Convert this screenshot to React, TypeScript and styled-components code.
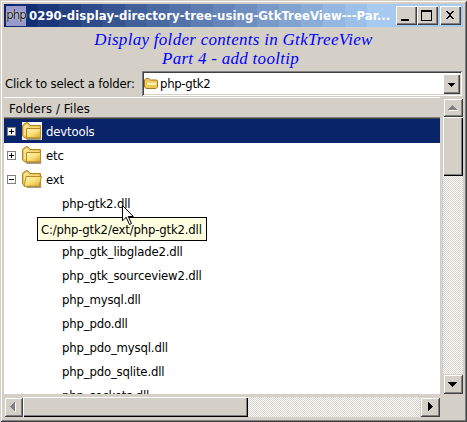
import React from "react";
import styled, { createGlobalStyle, css } from "styled-components";

const face = "#d4d0c8";
const navy = "#0a246a";
const uiFont = `"DejaVu Sans Condensed", "DejaVu Sans", sans-serif`;

/* The caption fades in flat 22px bands from navy to light blue. */
const captionBands = (() => {
  const from = [10, 36, 106];
  const to = [166, 202, 240];
  const stops: string[] = [];
  const count = 18;
  for (let i = 0; i < count; i++) {
    const t = i / (count - 1);
    const c = from.map((v, k) => Math.round(v + (to[k] - v) * t)).join(",");
    const start = i === 0 ? 0 : 11 + (i - 1) * 22;
    const end = i === count - 1 ? "100%" : `${11 + i * 22}px`;
    stops.push(`rgb(${c}) ${start}px ${end}`);
  }
  return `linear-gradient(90deg, ${stops.join(", ")})`;
})();

const Global = createGlobalStyle`
  * { box-sizing: border-box; }
  body { margin: 0; background: ${face}; overflow: hidden; }
`;

const raised = css`
  background: ${face};
  box-shadow: inset 1px 1px #fff, inset -1px -1px #404040, inset -2px -2px #808080;
`;

const Window = styled.div`
  width: 467px;
  height: 422px;
  padding: 4px;
  display: flex;
  flex-direction: column;
  background: ${face};
  box-shadow: inset 1px 1px ${face}, inset -1px -1px #404040, inset 2px 2px #fff, inset -2px -2px #808080;
  font: 13px/16px ${uiFont};
  color: #000;
  white-space: nowrap;
  overflow: hidden;
`;

const Label = styled.span<{ $gap?: number }>`
  letter-spacing: ${(p) => p.$gap ?? -0.17}px;
`;

const TitleBar = styled.header`
  flex: none;
  width: 459px;
  height: 23px;
  padding: 1px 2px;
  display: flex;
  align-items: center;
  background: ${captionBands};
  color: #fff;
  font-weight: bold;
`;

const PhpIcon = styled.div`
  flex: none;
  width: 20px;
  height: 20px;
  margin-right: 3px;
  background: #9999cc;
  color: #111;
  font: 13px/17px ${uiFont};
  letter-spacing: -1px;
  text-align: center;
  text-shadow: 0 0 1px #fff, 0 0 2px #ddd;
`;

const Caption = styled.div`
  flex: 1;
`;

const CaptionButton = styled.button<{ $apart?: boolean }>`
  ${raised}
  flex: none;
  width: 21px;
  height: 19px;
  margin-left: ${(p) => (p.$apart ? 2 : 0)}px;
  padding: 0;
  border: 0;
  display: grid;
`;

const Heading = styled.h1`
  flex: none;
  height: 44px;
  margin: 0;
  padding-top: 3px;
  color: #0000ff;
  text-align: center;
  font: italic 17px/19px "Liberation Serif", serif;
`;

const HeadingLine = styled.div<{ $trail?: number }>`
  padding-right: ${(p) => p.$trail ?? 0}px;
  letter-spacing: 0.29px;
`;

const ChooserRow = styled.div`
  flex: none;
  height: 25px;
  display: flex;
  align-items: center;
  padding-left: 1px;
`;

const ChooserLabel = styled.label`
  width: 137px;
`;

const Combo = styled.div`
  width: 320px;
  height: 25px;
  padding: 2px;
  display: flex;
  align-items: center;
  background: #fff;
  box-shadow: inset 1px 1px #808080, inset -1px -1px #fff, inset 2px 2px #404040, inset -2px -2px ${face};
`;

const ComboText = styled.div`
  flex: 1;
  padding-left: 1px;
`;

const ComboButton = styled.button`
  ${raised}
  width: 17px;
  height: 20px;
  padding: 0;
  border: 0;
  display: grid;
`;

const Panel = styled.main`
  display: grid;
  grid-template-columns: 436px 20px;
  grid-template-rows: 298px 20px;
  gap: 3px;
`;

const Tree = styled.section`
  background: #fff;
  overflow: hidden;
`;

const ColumnHeader = styled.div`
  height: 23px;
  padding: 5px 0 0 5px;
  background: ${face};
  box-shadow: inset 0 1px ${face}, inset 0 2px #fff, inset 0 -1px #404040, inset 0 -2px #808080;
`;

const Row = styled.div<{ $selected?: boolean }>`
  height: 24px;
  display: flex;
  align-items: center;
  padding-left: 3px;
  background: ${(p) => (p.$selected ? navy : "#fff")};
  color: ${(p) => (p.$selected ? "#fff" : "#000")};

  > span {
    margin-top: 2px;
  }
`;

const FileRow = styled(Row)`
  padding-left: 58px;
`;

const Expander = styled.svg`
  width: 9px;
  height: 9px;
  margin: 1px 6px 0 0;
`;

const FolderSvg = styled.svg`
  flex: none;
  margin-right: 4px;
`;

const ScrollBar = styled.div<{ $vertical?: boolean }>`
  display: flex;
  flex-direction: ${(p) => (p.$vertical ? "column" : "row")};
  background: repeating-conic-gradient(${face} 0 25%, #fff 0 50%) 0 0 / 2px 2px;
`;

const VerticalBar = styled(ScrollBar)`
  margin-top: 2px;
`;

const ScrollButton = styled.button<{ $w: number; $h: number }>`
  background: ${face};
  box-shadow: inset 1px 1px ${face}, inset -1px -1px #404040, inset 2px 2px #fff, inset -2px -2px #808080;
  flex: none;
  width: ${(p) => p.$w}px;
  height: ${(p) => p.$h}px;
  padding: 0;
  border: 0;
  display: grid;
`;

const Thumb = styled.div<{ $w: number; $h: number }>`
  flex: none;
  width: ${(p) => p.$w}px;
  height: ${(p) => p.$h}px;
  background: ${face};
  box-shadow: inset 1px 1px #fff, inset -1px -1px #000, inset -2px -2px #808080;
`;

const Filler = styled.div`
  flex: 1;
`;

const Tooltip = styled.div`
  position: absolute;
  left: 37px;
  top: 217px;
  width: 170px;
  height: 24px;
  padding: 4px 0 0 3px;
  border: 1px solid #000;
  background: #ffffe1;
`;

const Pointer = styled.svg`
  position: absolute;
  left: 122px;
  top: 204px;
`;

function Folder({ open, white }: { open?: boolean; white?: boolean }) {
  return (
    <FolderSvg width="20" height="18" viewBox="0 0 20 18">
      <defs>
        <linearGradient id="front" x1="0" y1="0" x2="1" y2="1">
          <stop offset="0" stopColor="#fff6b4" />
          <stop offset=".5" stopColor="#fbe07a" />
          <stop offset="1" stopColor="#d9a62c" />
        </linearGradient>
      </defs>
      {white && <rect width="20" height="18" fill="#fff" />}
      <path d="M3 15.5h16.5V17l-1 1H5z" fill="#77736a" opacity=".7" />
      <path d="M.5 4 1.5 2.5 4 .8h2L8 3.5h10.5V15l-1 1H3L.5 14z" fill="#e9bd45" stroke="#b08420" />
      <path d="M1.7 4.3 4.5 2h1l2 2.7H17v1H5L3.8 14 1.7 13z" fill="#f9e394" />
      {open ? (
        <path d="M4.2 6.5h15.2l-2 9.8H2z" fill="url(#front)" stroke="#b88c20" />
      ) : (
        <path d="M4.5 6.5h14v9.3h-14z" fill="url(#front)" stroke="#b88c20" />
      )}
    </FolderSvg>
  );
}

function Toggle({ open }: { open?: boolean }) {
  return (
    <Expander viewBox="0 0 9 9" shapeRendering="crispEdges">
      <rect x=".5" y=".5" width="8" height="8" fill="#fff" stroke="#808080" />
      <path d={open ? "M2 4.5h5" : "M2 4.5h5M4.5 2v5"} stroke="#000" />
    </Expander>
  );
}

const directories = [
  { name: "devtools", selected: true, open: false },
  { name: "etc", selected: false, open: false },
  { name: "ext", selected: false, open: true },
];

/* The blank entry is the row that lies under the tooltip. */
const files = [
  "php-gtk2.dll",
  "",
  "php_gtk_libglade2.dll",
  "php_gtk_sourceview2.dll",
  "php_mysql.dll",
  "php_pdo.dll",
  "php_pdo_mysql.dll",
  "php_pdo_sqlite.dll",
  "php_sockets.dll",
];

export default function App() {
  return (
    <>
      <Global />
      <Window>
        <TitleBar>
          <PhpIcon>php</PhpIcon>
          <Caption><Label $gap={0.07}>0290-display-directory-tree-using-GtkTreeView---Par...</Label></Caption>
          <CaptionButton aria-label="Minimize">
            <svg width="21" height="19" shapeRendering="crispEdges"><path d="M5 13h8v2H5z" /></svg>
          </CaptionButton>
          <CaptionButton aria-label="Maximize">
            <svg width="21" height="19" shapeRendering="crispEdges"><path d="M4 4h11v11H4zM5 6v8h9V6z" fillRule="evenodd" /></svg>
          </CaptionButton>
          <CaptionButton $apart aria-label="Close">
            <svg width="21" height="19" shapeRendering="crispEdges"><path d="M6 5h2v1h1v1h2V6h1V5h2v1h-1v1h-1v1h-1v2h1v1h1v1h1v1h-2v-1h-1v-1H9v1H8v1H6v-1h1v-1h1v-1h1V8H8V7H7V6H6z" /></svg>
          </CaptionButton>
        </TitleBar>
        <Heading>
          <HeadingLine>Display folder contents in GtkTreeView</HeadingLine>
          <HeadingLine $trail={6}>Part 4 - add tooltip</HeadingLine>
        </Heading>
        <ChooserRow>
          <ChooserLabel><Label>Click to select a folder:</Label></ChooserLabel>
          <Combo>
            <svg width="15" height="17" viewBox="0 0 15 17">
              <path d="M.5 5 2 3.5h3L6.5 5H13l.5 1v6L12 13.5H2L.5 12z" fill="#efc65a" stroke="#a87924" />
              <path d="M3 7.5h9.5V10H3z" fill="#fff0ae" />
            </svg>
            <ComboText><Label $gap={-0.3}>php-gtk2</Label></ComboText>
            <ComboButton aria-label="Open list">
              <svg width="17" height="20" shapeRendering="crispEdges"><path d="M5 9h7v1h-1v1h-1v1H9v1H8v-1H7v-1H6v-1H5z" /></svg>
            </ComboButton>
          </Combo>
        </ChooserRow>
        <Panel>
          <Tree>
            <ColumnHeader><Label $gap={0.13}>Folders / Files</Label></ColumnHeader>
            {directories.map((d) => (
              <Row key={d.name} $selected={d.selected}>
                <Toggle open={d.open} />
                <Folder open={d.open} white={d.selected} />
                <Label>{d.name}</Label>
              </Row>
            ))}
            {files.map((f) => (
              <FileRow key={f}>{f && <Label>{f}</Label>}</FileRow>
            ))}
          </Tree>
          <VerticalBar $vertical>
            <ScrollButton $w={20} $h={19} aria-label="Scroll up">
              <svg width="20" height="19" shapeRendering="crispEdges"><path d="M6 12h9v1H6z" fill="#fff" /><path d="M9 7h1v1h1v1h1v1h1v1h1v1H5v-1h1v-1h1V9h1V8h1z" fill="#808080" /></svg>
            </ScrollButton>
            <Thumb $w={20} $h={59} />
            <Filler />
            <ScrollButton $w={20} $h={20} aria-label="Scroll down">
              <svg width="20" height="20" shapeRendering="crispEdges"><path d="M5 8h9v1h-1v1h-1v1h-1v1h-1v1H9v-1H8v-1H7v-1H6V9H5z" /></svg>
            </ScrollButton>
          </VerticalBar>
          <ScrollBar>
            <ScrollButton $w={19} $h={20} aria-label="Scroll left">
              <svg width="19" height="20" shapeRendering="crispEdges"><path d="M11 6h1v9h-1z" fill="#fff" /><path d="M11 5v9h-1v-1H9v-1H8v-1H7v-1H6V9h1V8h1V7h1V6h1V5z" fill="#808080" /></svg>
            </ScrollButton>
            <Thumb $w={225} $h={20} />
            <Filler />
            <ScrollButton $w={20} $h={20} aria-label="Scroll right">
              <svg width="20" height="20" shapeRendering="crispEdges"><path d="M8 5h1v1h1v1h1v1h1v1h1v1h-1v1h-1v1h-1v1H9v1H8z" /></svg>
            </ScrollButton>
          </ScrollBar>
        </Panel>
        <Tooltip><Label>C:/php-gtk2/ext/php-gtk2.dll</Label></Tooltip>
        <Pointer width="13" height="22" viewBox="0 0 13 22">
          <path d="M.5 1.5v15.3l3.7-3.5 3.3 7.2 2-.9-3.2-7.1h5z" fill="#fff" stroke="#000" />
        </Pointer>
      </Window>
    </>
  );
}
